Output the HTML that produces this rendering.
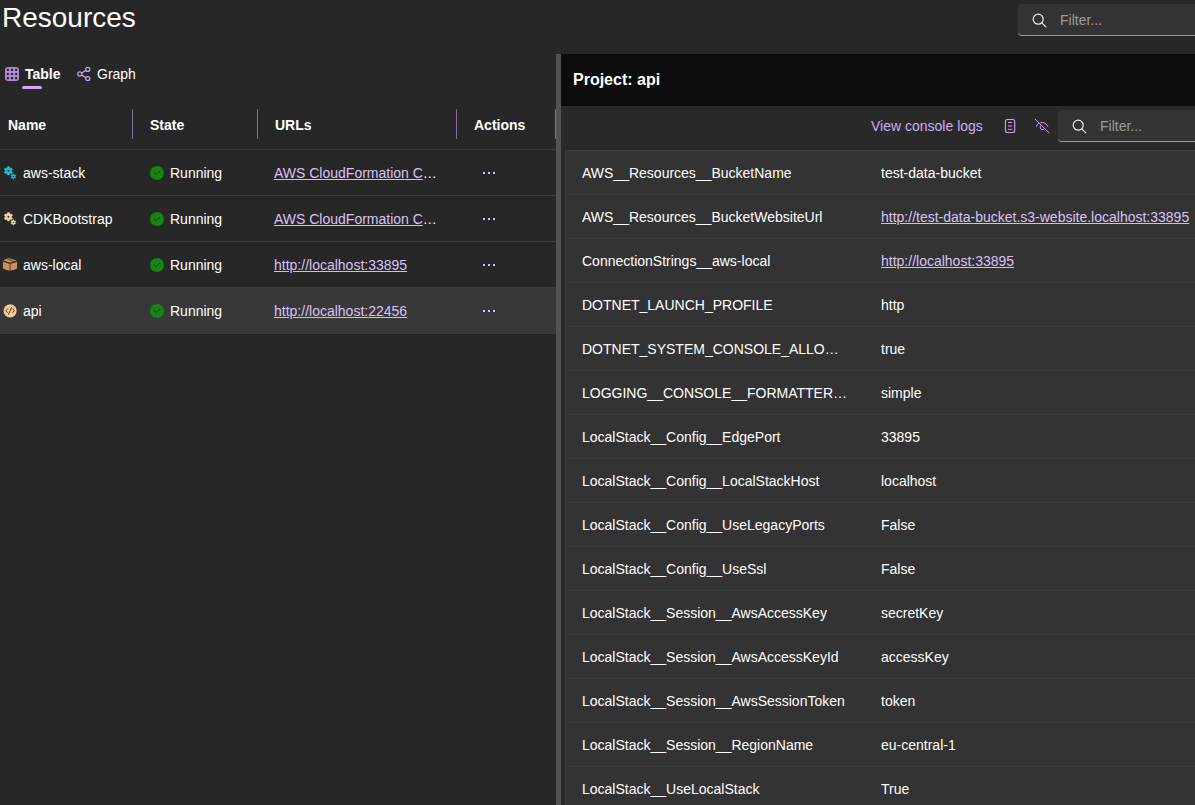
<!DOCTYPE html>
<html><head><meta charset="utf-8">
<style>
*{box-sizing:border-box;margin:0;padding:0}
html,body{width:1195px;height:805px;overflow:hidden;background:#272727;font-family:"Liberation Sans",sans-serif;color:#fff;font-size:14px}
.abs{position:absolute}
.title{left:2px;top:1px;font-size:28px;line-height:34px;color:#fff;white-space:nowrap}
.filter{background:#333;border-radius:4px;border-bottom:1px solid #9a9a9a}
.filter .ph{color:#9b9b9b;font-size:14px;position:absolute;white-space:nowrap}
.tab{font-size:14px;line-height:16px;white-space:nowrap}
.hdr{font-weight:bold;font-size:14px;line-height:16px;white-space:nowrap}
.sep{width:1px;background:#8671a0;border-radius:1px}
.rowline{height:1px;background:#3b3b3b}
.txt{white-space:nowrap;line-height:16px}
.link{color:#d8c2f6;text-decoration:underline;text-decoration-color:#e0b4f4;text-underline-offset:1px}
.dot{width:2px;height:2px;background:#dbb8fc}
.green{width:14px;height:14px;border-radius:50%;background:#178a17}
</style></head><body>
<div class="abs title">Resources</div>

<!-- top filter -->
<div class="abs filter" style="left:1018px;top:4px;width:200px;height:32px">
  <svg class="abs" style="left:14px;top:9px" width="15" height="15" viewBox="0 0 15 15"><circle cx="6.2" cy="6.2" r="5" fill="none" stroke="#eee" stroke-width="1.2"/><line x1="9.8" y1="9.8" x2="13.9" y2="13.9" stroke="#eee" stroke-width="1.2" stroke-linecap="round"/></svg>
  <div class="ph" style="left:42px;top:8px;line-height:16px">Filter...</div>
</div>

<!-- tabs -->
<svg class="abs" style="left:5px;top:67px" width="14" height="14" viewBox="0 0 14 14"><rect x="0" y="0" width="14" height="14" rx="3" fill="#ab88d2"/><rect x="1.8" y="1.8" width="2.2" height="2.2" rx="1" fill="#1c1c1c"/><rect x="5.9" y="1.8" width="2.2" height="2.2" rx="1" fill="#1c1c1c"/><rect x="10.0" y="1.8" width="2.2" height="2.2" rx="1" fill="#1c1c1c"/><rect x="1.8" y="5.9" width="2.2" height="2.2" rx="1" fill="#1c1c1c"/><rect x="5.9" y="5.9" width="2.2" height="2.2" rx="1" fill="#1c1c1c"/><rect x="10.0" y="5.9" width="2.2" height="2.2" rx="1" fill="#1c1c1c"/><rect x="1.8" y="10.0" width="2.2" height="2.2" rx="1" fill="#1c1c1c"/><rect x="5.9" y="10.0" width="2.2" height="2.2" rx="1" fill="#1c1c1c"/><rect x="10.0" y="10.0" width="2.2" height="2.2" rx="1" fill="#1c1c1c"/></svg>
<div class="abs tab" style="left:25px;top:66px;font-weight:bold">Table</div>
<div class="abs" style="left:22px;top:86px;width:20px;height:3px;border-radius:2px;background:#d4a6f8"></div>
<svg class="abs" style="left:77px;top:67px" width="14" height="14" viewBox="0 0 14 14"><g fill="none" stroke="#c8a0f0" stroke-width="1.25"><circle cx="10.8" cy="2.4" r="2.05"/><circle cx="2.8" cy="7" r="2.05"/><circle cx="10.8" cy="11.6" r="2.05"/><path d="M4.6 6L9 3.4M4.6 8L9 10.6"/></g></svg>
<div class="abs tab" style="left:97px;top:66px">Graph</div>

<!-- left grid header -->
<div class="abs hdr" style="left:8px;top:117px">Name</div>
<div class="abs hdr" style="left:150px;top:117px">State</div>
<div class="abs hdr" style="left:275px;top:117px">URLs</div>
<div class="abs hdr" style="left:474px;top:117px">Actions</div>
<div class="abs sep" style="left:132px;top:109px;height:30px"></div>
<div class="abs sep" style="left:257px;top:109px;height:30px"></div>
<div class="abs sep" style="left:456px;top:109px;height:30px"></div>
<div class="abs sep" style="left:555px;top:109px;height:30px"></div>

<!-- left rows -->
<div class="abs rowline" style="left:0;top:149px;width:556px"></div>
<div class="abs rowline" style="left:0;top:195px;width:556px"></div>
<div class="abs rowline" style="left:0;top:241px;width:556px"></div>
<div class="abs" style="left:0;top:287px;width:556px;height:46px;background:#383838"></div>
<div class="abs rowline" style="left:0;top:287px;width:556px"></div>
<div class="abs rowline" style="left:0;top:333px;width:556px"></div>

<div id="lrows">
<svg class="abs" style="left:1px;top:163px" width="18" height="18" viewBox="0 0 18 18"><path d="M6.14 4.97 L6.56 3.58 L8.24 3.58 L8.66 4.97 L9.22 5.29 L10.63 4.96 L11.47 6.42 L10.48 7.48 L10.48 8.12 L11.47 9.18 L10.63 10.64 L9.22 10.31 L8.66 10.63 L8.24 12.02 L6.56 12.02 L6.14 10.63 L5.58 10.31 L4.17 10.64 L3.33 9.18 L4.32 8.12 L4.32 7.48 L3.33 6.42 L4.17 4.96 L5.58 5.29Z" fill="#1bbfc9" stroke="#1bbfc9" stroke-width="0.5" stroke-linejoin="round"/><circle cx="7.4" cy="7.8" r="1.0" fill="#272727"/><path d="M11.67 11.82 L11.90 10.73 L12.70 10.73 L12.93 11.82 L13.35 12.06 L14.41 11.72 L14.81 12.41 L13.98 13.16 L13.98 13.64 L14.81 14.39 L14.41 15.08 L13.35 14.74 L12.93 14.98 L12.70 16.07 L11.90 16.07 L11.67 14.98 L11.25 14.74 L10.19 15.08 L9.79 14.39 L10.62 13.64 L10.62 13.16 L9.79 12.41 L10.19 11.72 L11.25 12.06Z" fill="#1bbfc9" stroke="#1bbfc9" stroke-width="0.4" stroke-linejoin="round"/><circle cx="12.3" cy="13.4" r="0.55" fill="#272727"/></svg>
<div class="abs txt" style="left:23px;top:165px">aws-stack</div>
<svg class="abs" style="left:150px;top:166px" width="14" height="14" viewBox="0 0 14 14"><circle cx="7" cy="7" r="7" fill="#128712"/><path d="M4.3 6.6L6.3 8.5L9.8 5.3" fill="none" stroke="#183818" stroke-width="1" stroke-linecap="round" stroke-linejoin="round"/></svg>
<div class="abs txt" style="left:170px;top:165px">Running</div>
<div class="abs txt" style="left:274px;top:165px;width:166px;overflow:hidden;text-overflow:ellipsis"><span class="link">AWS CloudFormation Console</span></div>
<div class="abs dot" style="left:483px;top:172px"></div>
<div class="abs dot" style="left:488px;top:172px"></div>
<div class="abs dot" style="left:493px;top:172px"></div>
<svg class="abs" style="left:1px;top:209px" width="18" height="18" viewBox="0 0 18 18"><path d="M6.14 4.97 L6.56 3.58 L8.24 3.58 L8.66 4.97 L9.22 5.29 L10.63 4.96 L11.47 6.42 L10.48 7.48 L10.48 8.12 L11.47 9.18 L10.63 10.64 L9.22 10.31 L8.66 10.63 L8.24 12.02 L6.56 12.02 L6.14 10.63 L5.58 10.31 L4.17 10.64 L3.33 9.18 L4.32 8.12 L4.32 7.48 L3.33 6.42 L4.17 4.96 L5.58 5.29Z" fill="#f3d9a0" stroke="#f3d9a0" stroke-width="0.5" stroke-linejoin="round"/><circle cx="7.4" cy="7.8" r="1.0" fill="#272727"/><path d="M11.67 11.82 L11.90 10.73 L12.70 10.73 L12.93 11.82 L13.35 12.06 L14.41 11.72 L14.81 12.41 L13.98 13.16 L13.98 13.64 L14.81 14.39 L14.41 15.08 L13.35 14.74 L12.93 14.98 L12.70 16.07 L11.90 16.07 L11.67 14.98 L11.25 14.74 L10.19 15.08 L9.79 14.39 L10.62 13.64 L10.62 13.16 L9.79 12.41 L10.19 11.72 L11.25 12.06Z" fill="#f3d9a0" stroke="#f3d9a0" stroke-width="0.4" stroke-linejoin="round"/><circle cx="12.3" cy="13.4" r="0.55" fill="#272727"/></svg>
<div class="abs txt" style="left:23px;top:211px">CDKBootstrap</div>
<svg class="abs" style="left:150px;top:212px" width="14" height="14" viewBox="0 0 14 14"><circle cx="7" cy="7" r="7" fill="#128712"/><path d="M4.3 6.6L6.3 8.5L9.8 5.3" fill="none" stroke="#183818" stroke-width="1" stroke-linecap="round" stroke-linejoin="round"/></svg>
<div class="abs txt" style="left:170px;top:211px">Running</div>
<div class="abs txt" style="left:274px;top:211px;width:166px;overflow:hidden;text-overflow:ellipsis"><span class="link">AWS CloudFormation Console</span></div>
<div class="abs dot" style="left:483px;top:218px"></div>
<div class="abs dot" style="left:488px;top:218px"></div>
<div class="abs dot" style="left:493px;top:218px"></div>
<svg class="abs" style="left:1px;top:255px" width="18" height="18" viewBox="0 0 18 18"><path d="M1.9 6.6L9.1 8.7L16.1 6.6V13.4Q9.1 17.6 1.9 13.4Z" fill="#c8915c"/><path d="M2.2 5.6L7.3 3.0L15.8 5.4L9.1 7.8Z" fill="#c8915c"/><path d="M6.2 3.9L12.8 6.6" stroke="#3a3026" stroke-width="0.9"/><path d="M1.9 6.4L9.1 8.5L16.1 6.4" fill="none" stroke="#3a3026" stroke-width="0.9"/><path d="M9.1 8.8V16.3" stroke="#6a4e36" stroke-width="1.3"/></svg>
<div class="abs txt" style="left:23px;top:257px">aws-local</div>
<svg class="abs" style="left:150px;top:258px" width="14" height="14" viewBox="0 0 14 14"><circle cx="7" cy="7" r="7" fill="#128712"/><path d="M4.3 6.6L6.3 8.5L9.8 5.3" fill="none" stroke="#183818" stroke-width="1" stroke-linecap="round" stroke-linejoin="round"/></svg>
<div class="abs txt" style="left:170px;top:257px">Running</div>
<div class="abs txt" style="left:274px;top:257px;width:166px;overflow:hidden;text-overflow:ellipsis"><span class="link">http://localhost:33895</span></div>
<div class="abs dot" style="left:483px;top:264px"></div>
<div class="abs dot" style="left:488px;top:264px"></div>
<div class="abs dot" style="left:493px;top:264px"></div>
<svg class="abs" style="left:1px;top:301px" width="18" height="18" viewBox="0 0 18 18"><circle cx="9.1" cy="9.8" r="6.6" fill="#f8c896"/><path d="M6.4 7.9L4.9 9.7L6.4 11.5M11.8 7.9L13.3 9.7L11.8 11.5M10.6 6.5L7.6 13.3" fill="none" stroke="#4a3f33" stroke-width="0.95" stroke-linecap="round" stroke-linejoin="round"/></svg>
<div class="abs txt" style="left:23px;top:303px">api</div>
<svg class="abs" style="left:150px;top:304px" width="14" height="14" viewBox="0 0 14 14"><circle cx="7" cy="7" r="7" fill="#128712"/><path d="M4.3 6.6L6.3 8.5L9.8 5.3" fill="none" stroke="#183818" stroke-width="1" stroke-linecap="round" stroke-linejoin="round"/></svg>
<div class="abs txt" style="left:170px;top:303px">Running</div>
<div class="abs txt" style="left:274px;top:303px;width:166px;overflow:hidden;text-overflow:ellipsis"><span class="link">http://localhost:22456</span></div>
<div class="abs dot" style="left:483px;top:310px"></div>
<div class="abs dot" style="left:488px;top:310px"></div>
<div class="abs dot" style="left:493px;top:310px"></div>
</div><!--/lrows-->

<!-- splitter -->
<div class="abs" style="left:556px;top:54px;width:5px;height:751px;background:#525252"></div>

<!-- right panel -->
<div class="abs" style="left:561px;top:54px;width:634px;height:52px;background:#0c0c0c"></div>
<div class="abs" style="left:573px;top:71px;font-size:16px;font-weight:bold;line-height:18px;white-space:nowrap">Project: api</div>
<div class="abs" style="left:561px;top:106px;width:634px;height:699px;background:#292929"></div>
<div class="abs txt" style="left:871px;top:118px;color:#c9aef2">View console logs</div>
<svg class="abs" style="left:1004px;top:118px" width="12" height="16" viewBox="0 0 12 16"><rect x="1.4" y="1.5" width="9.3" height="13" rx="2" fill="none" stroke="#c9a0f5" stroke-width="1.1"/><path d="M4 4.5H8M4 11.4H8" stroke="#c9a0f5" stroke-width="1"/><path d="M4 8H8" stroke="#9878b8" stroke-width="1.4"/></svg>
<svg class="abs" style="left:1033px;top:117px" width="18" height="18" viewBox="0 0 18 18"><g fill="none" stroke="#c9a0f5" stroke-width="1" stroke-linecap="round"><path d="M2.3 2.3L15.9 15.7"/><path d="M7.8 5.6Q12.6 4.6 14.8 9.4"/><path d="M5.6 6.2Q4.0 7.6 3.4 9.5"/><path d="M7.4 8.8Q6.2 11.8 9.0 12.6Q10.2 12.8 11.0 12.1"/></g></svg>
<div class="abs filter" style="left:1058px;top:110px;width:200px;height:32px">
  <svg class="abs" style="left:14px;top:9px" width="15" height="15" viewBox="0 0 15 15"><circle cx="6.2" cy="6.2" r="5" fill="none" stroke="#eee" stroke-width="1.2"/><line x1="9.8" y1="9.8" x2="13.9" y2="13.9" stroke="#eee" stroke-width="1.2" stroke-linecap="round"/></svg>
  <div class="ph" style="left:42px;top:8px;line-height:16px">Filter...</div>
</div>

<div class="abs" style="left:565px;top:150px;width:630px;height:655px;background:#333;border-top:1px solid #3e3e3e;border-left:1px solid #3e3e3e"></div>
<div id="rrows">
<div class="abs txt" style="left:582px;top:165px;width:267px;overflow:hidden;text-overflow:ellipsis">AWS__Resources__BucketName</div>
<div class="abs txt" style="left:881px;top:165px">test-data-bucket</div>
<div class="abs rowline" style="left:566px;top:194px;width:629px"></div>
<div class="abs txt" style="left:582px;top:209px;width:267px;overflow:hidden;text-overflow:ellipsis">AWS__Resources__BucketWebsiteUrl</div>
<div class="abs txt link" style="left:881px;top:209px">http://test-data-bucket.s3-website.localhost:33895</div>
<div class="abs rowline" style="left:566px;top:238px;width:629px"></div>
<div class="abs txt" style="left:582px;top:253px;width:267px;overflow:hidden;text-overflow:ellipsis">ConnectionStrings__aws-local</div>
<div class="abs txt link" style="left:881px;top:253px">http://localhost:33895</div>
<div class="abs rowline" style="left:566px;top:282px;width:629px"></div>
<div class="abs txt" style="left:582px;top:297px;width:267px;overflow:hidden;text-overflow:ellipsis">DOTNET_LAUNCH_PROFILE</div>
<div class="abs txt" style="left:881px;top:297px">http</div>
<div class="abs rowline" style="left:566px;top:326px;width:629px"></div>
<div class="abs txt" style="left:582px;top:341px;width:267px;overflow:hidden;text-overflow:ellipsis">DOTNET_SYSTEM_CONSOLE_ALLOW_ANSI_COLOR_REDIRECTION</div>
<div class="abs txt" style="left:881px;top:341px">true</div>
<div class="abs rowline" style="left:566px;top:370px;width:629px"></div>
<div class="abs txt" style="left:582px;top:385px;width:267px;overflow:hidden;text-overflow:ellipsis">LOGGING__CONSOLE__FORMATTERNAME</div>
<div class="abs txt" style="left:881px;top:385px">simple</div>
<div class="abs rowline" style="left:566px;top:414px;width:629px"></div>
<div class="abs txt" style="left:582px;top:429px;width:267px;overflow:hidden;text-overflow:ellipsis">LocalStack__Config__EdgePort</div>
<div class="abs txt" style="left:881px;top:429px">33895</div>
<div class="abs rowline" style="left:566px;top:458px;width:629px"></div>
<div class="abs txt" style="left:582px;top:473px;width:267px;overflow:hidden;text-overflow:ellipsis">LocalStack__Config__LocalStackHost</div>
<div class="abs txt" style="left:881px;top:473px">localhost</div>
<div class="abs rowline" style="left:566px;top:502px;width:629px"></div>
<div class="abs txt" style="left:582px;top:517px;width:267px;overflow:hidden;text-overflow:ellipsis">LocalStack__Config__UseLegacyPorts</div>
<div class="abs txt" style="left:881px;top:517px">False</div>
<div class="abs rowline" style="left:566px;top:546px;width:629px"></div>
<div class="abs txt" style="left:582px;top:561px;width:267px;overflow:hidden;text-overflow:ellipsis">LocalStack__Config__UseSsl</div>
<div class="abs txt" style="left:881px;top:561px">False</div>
<div class="abs rowline" style="left:566px;top:590px;width:629px"></div>
<div class="abs txt" style="left:582px;top:605px;width:267px;overflow:hidden;text-overflow:ellipsis">LocalStack__Session__AwsAccessKey</div>
<div class="abs txt" style="left:881px;top:605px">secretKey</div>
<div class="abs rowline" style="left:566px;top:634px;width:629px"></div>
<div class="abs txt" style="left:582px;top:649px;width:267px;overflow:hidden;text-overflow:ellipsis">LocalStack__Session__AwsAccessKeyId</div>
<div class="abs txt" style="left:881px;top:649px">accessKey</div>
<div class="abs rowline" style="left:566px;top:678px;width:629px"></div>
<div class="abs txt" style="left:582px;top:693px;width:267px;overflow:hidden;text-overflow:ellipsis">LocalStack__Session__AwsSessionToken</div>
<div class="abs txt" style="left:881px;top:693px">token</div>
<div class="abs rowline" style="left:566px;top:722px;width:629px"></div>
<div class="abs txt" style="left:582px;top:737px;width:267px;overflow:hidden;text-overflow:ellipsis">LocalStack__Session__RegionName</div>
<div class="abs txt" style="left:881px;top:737px">eu-central-1</div>
<div class="abs rowline" style="left:566px;top:766px;width:629px"></div>
<div class="abs txt" style="left:582px;top:781px;width:267px;overflow:hidden;text-overflow:ellipsis">LocalStack__UseLocalStack</div>
<div class="abs txt" style="left:881px;top:781px">True</div>
</div><!--/rrows-->
</body></html>
